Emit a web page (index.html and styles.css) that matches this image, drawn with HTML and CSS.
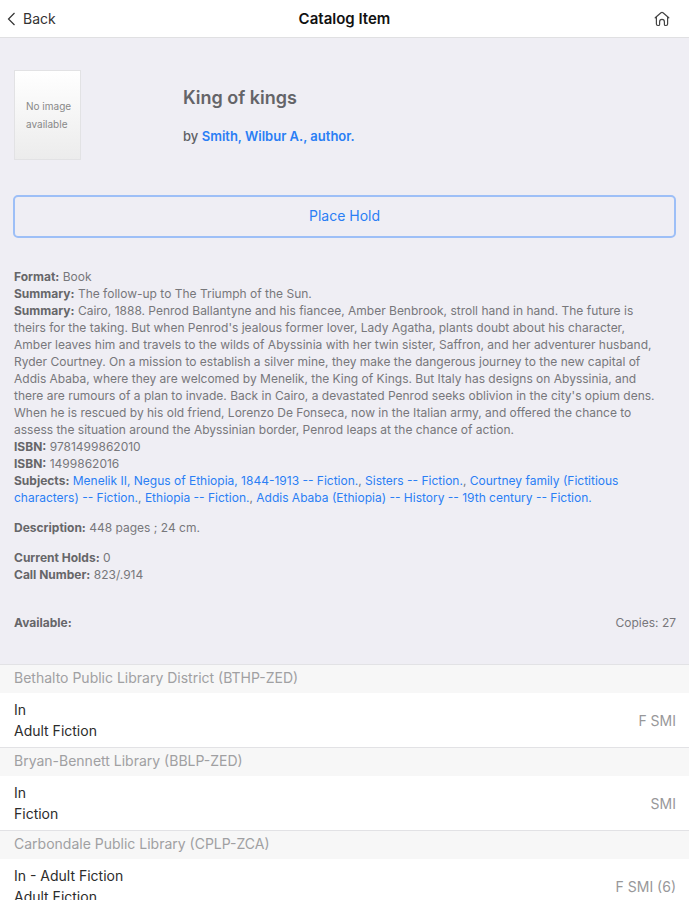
FILE: index.html
```
<!DOCTYPE html>
<html lang="en">
<head>
    <meta charset="UTF-8">
    <meta name="viewport" content="width=device-width, initial-scale=1.0">
    <title>Catalog Item</title>
    <link rel="stylesheet" href="styles.css">
</head>
<body>

<div class="app">
    <header class="navbar">
        <a href="#" class="back">
            <svg width="9" height="14" viewBox="0 0 9 14" aria-hidden="true">
                <path d="M7.5 1 1.5 7l6 6" fill="none" stroke="#333" stroke-width="1.2"/>
            </svg>
            Back
        </a>
        <h1>Catalog Item</h1>
        <a href="#" class="home" aria-label="Home">
            <svg width="16" height="16" viewBox="0 0 16 16" aria-hidden="true">
                <path d="M1.2 6.8 7 1.7q1-.8 2 0l5.8 5.1M2.4 6v7.1q0 1.4 1.4 1.4h.8q1 0 1-1V11q0-2.6 2.4-2.6t2.4 2.6v2.5q0 1 1 1h.8q1.4 0 1.4-1.4V6" fill="none" stroke="#444" stroke-width="1.2" stroke-linecap="round" stroke-linejoin="round"/>
            </svg>
        </a>
    </header>

    <main>
        <section class="item">
            <div class="book">
                <div class="cover">No image available</div>
                <div>
                    <h2>King of kings</h2>
                    <p class="author">by <a href="#">Smith, Wilbur A., author.</a></p>
                </div>
            </div>

            <button type="button" class="hold">Place Hold</button>

            <div class="details">
                <p><b>Format:</b> Book</p>
                <p><b>Summary:</b> The follow-up to The Triumph of the Sun.</p>
                <p><b>Summary:</b> Cairo, 1888. Penrod Ballantyne and his fiancee, Amber Benbrook, stroll hand in hand. The future is theirs for the taking. But when Penrod's jealous former lover, Lady Agatha, plants doubt about his character, Amber leaves him and travels to the wilds of Abyssinia with her twin sister, Saffron, and her adventurer husband, Ryder Courtney. On a mission to establish a silver mine, they make the dangerous journey to the new capital of Addis Ababa, where they are welcomed by Menelik, the King of Kings. But Italy has designs on Abyssinia, and there are rumours of a plan to invade. Back in Cairo, a devastated Penrod seeks oblivion in the city's opium dens. When he is rescued by his old friend, Lorenzo De Fonseca, now in the Italian army, and offered the chance to assess the situation around the Abyssinian border, Penrod leaps at the chance of action.</p>
                <p><b>ISBN:</b> 9781499862010</p>
                <p><b>ISBN:</b> 1499862016</p>
                <p><b>Subjects:</b> <a href="#">Menelik II, Negus of Ethiopia, 1844-1913 -- Fiction.</a>, <a href="#">Sisters -- Fiction.</a>, <a href="#">Courtney family (Fictitious characters) -- Fiction.</a>, <a href="#">Ethiopia -- Fiction.</a>, <a href="#">Addis Ababa (Ethiopia) -- History -- 19th century -- Fiction.</a></p>
                <p class="group"><b>Description:</b> 448 pages ; 24 cm.</p>
                <p class="group"><b>Current Holds:</b> 0</p>
                <p><b>Call Number:</b> 823/.914</p>
            </div>

            <div class="available">
                <b>Available:</b>
                <span>Copies: 27</span>
            </div>
        </section>

        <!-- Copies by library -->
        <section class="library">
            <h3>Bethalto Public Library District (BTHP-ZED)</h3>
            <div class="copy">
                <p>In<br>Adult Fiction</p>
                <span>F SMI</span>
            </div>
        </section>
        <section class="library">
            <h3>Bryan-Bennett Library (BBLP-ZED)</h3>
            <div class="copy">
                <p>In<br>Fiction</p>
                <span>SMI</span>
            </div>
        </section>
        <section class="library">
            <h3>Carbondale Public Library (CPLP-ZCA)</h3>
            <div class="copy">
                <p>In - Adult Fiction<br>Adult Fiction</p>
                <span>F SMI (6)</span>
            </div>
        </section>
    </main>
</div>

</body>
</html>
```
FILE: styles.css
```
* {
    box-sizing: border-box;
}
body {
    font-family: Inter, "Liberation Sans", sans-serif;
    margin: 0;
    font-size: 12px;
    line-height: 17px;
    color: #77777b;
    background-color: #efeef4;
}
h1, h2, h3, p {
    margin: 0;
}
a {
    color: #2a7ef5;
    text-decoration: none;
}
b {
    font-weight: 700;
    color: #666669;
}
.app {
    display: flex;
    flex-direction: column;
    height: 100vh;
}
.navbar {
    display: grid;
    grid-template-columns: 1fr auto 1fr;
    align-items: center;
    flex: none;
    height: 38px;
    padding: 0 19px 0 7px;
    background-color: #fff;
    border-bottom: 1px solid #e0e0e2;
}
.navbar h1 {
    padding-left: 12px;
    font-size: 15px;
    font-weight: 600;
    color: #111;
}
.back {
    display: flex;
    align-items: center;
    gap: 7px;
    font-size: 14px;
    color: #333;
}
.home {
    display: flex;
    justify-content: flex-end;
}
main {
    flex: 1;
    overflow: hidden;
}
.item {
    padding: 32px 13px 33px;
}
.book {
    display: grid;
    grid-template-columns: 67px 1fr;
    column-gap: 102px;
    padding-left: 1px;
}
.book h2 {
    margin-top: 16px;
    font-size: 18px;
    line-height: 24px;
    font-weight: 600;
    color: #646468;
}
.cover {
    display: flex;
    align-items: center;
    height: 90px;
    padding: 0 6px 0 11px;
    font-size: 10px;
    line-height: 18px;
    color: #888;
    background: linear-gradient(#fff, #ececec);
    border: 1px solid #e2e2e4;
}
.author {
    margin-top: 18px;
    font-size: 13px;
    font-weight: 500;
    color: #606064;
}
.author a {
    font-weight: 600;
}
.hold {
    display: block;
    width: 100%;
    height: 43px;
    margin: 35px 0 30px;
    padding: 0 0 2px;
    font-family: inherit;
    font-size: 14px;
    color: #2a7ef5;
    background: none;
    border: 2px solid #9dbff7;
    border-radius: 5px;
}
.details {
    padding: 0 21px 0 1px;
}
.details .group {
    margin-top: 13px;
}
.available {
    display: flex;
    justify-content: space-between;
    padding: 31px 0 0 1px;
}
.library h3 {
    height: 29px;
    padding: 0 14px;
    font-size: 14px;
    line-height: 26px;
    font-weight: 400;
    color: #a0a0a2;
    background-color: #f7f7f7;
    border-top: 1px solid #e2e2e5;
}
.copy {
    display: flex;
    justify-content: space-between;
    align-items: center;
    height: 54px;
    padding: 0 13px 0 14px;
    font-size: 14px;
    line-height: 21px;
    color: #98989a;
    background-color: #fff;
}
.copy p {
    color: #2c2c2c;
}
```
